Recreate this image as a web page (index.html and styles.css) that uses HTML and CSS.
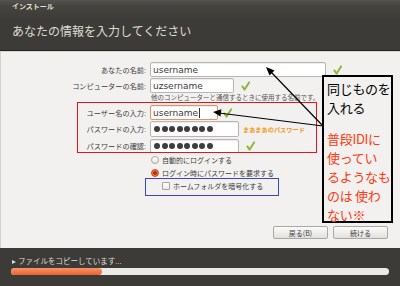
FILE: index.html
```html
<!DOCTYPE html>
<html lang="ja">
<head>
  <meta charset="UTF-8">
  <title>インストール</title>
  <link rel="stylesheet" href="styles.css">
</head>
<body>
<div class="window">
  <header class="head">
    <div class="wintitle">インストール</div>
    <h1 class="title">あなたの情報を入力してください</h1>
  </header>

  <main class="content">
    <div class="row r1">
      <label>あなたの名前:</label>
      <span class="input w176">username</span>
      <svg class="ok" viewBox="0 0 10 11" width="9" height="10"><path d="M1.5 6 L4 9.5 L9 1.5" fill="none" stroke="#8cb83e" stroke-width="2.2" stroke-linecap="round" stroke-linejoin="round"/></svg>
    </div>
    <div class="row r2">
      <label>コンピューターの名前:</label>
      <span class="input w84">uzsername</span>
      <svg class="ok" viewBox="0 0 10 11" width="9" height="10"><path d="M1.5 6 L4 9.5 L9 1.5" fill="none" stroke="#8cb83e" stroke-width="2.2" stroke-linecap="round" stroke-linejoin="round"/></svg>
    </div>
    <div class="hint">他のコンピューターと通信するときに使用する名前です。</div>
    <div class="row r3">
      <label>ユーザー名の入力:</label>
      <span class="input w68 focus">username<i class="caret"></i></span>
      <svg class="ok near" viewBox="0 0 10 11" width="9" height="10"><path d="M1.5 6 L4 9.5 L9 1.5" fill="none" stroke="#8cb83e" stroke-width="2.2" stroke-linecap="round" stroke-linejoin="round"/></svg>
    </div>
    <div class="row r4">
      <label>パスワードの入力:</label>
      <span class="input w89 dots"><i></i><i></i><i></i><i></i><i></i><i></i><i></i><i></i></span>
      <span class="strength">まあまあのパスワード</span>
    </div>
    <div class="row r5">
      <label>パスワードの確認:</label>
      <span class="input w89 dots"><i></i><i></i><i></i><i></i><i></i><i></i><i></i><i></i></span>
      <svg class="ok" viewBox="0 0 10 11" width="9" height="10"><path d="M1.5 6 L4 9.5 L9 1.5" fill="none" stroke="#8cb83e" stroke-width="2.2" stroke-linecap="round" stroke-linejoin="round"/></svg>
    </div>

    <div class="opt"><span class="radio"></span>自動的にログインする</div>
    <div class="opt"><span class="radio on"></span>ログイン時にパスワードを要求する</div>
    <div class="opt sub"><span class="check"></span>ホームフォルダを暗号化する</div>

    <div class="buttons">
      <button class="btn">戻る(B)</button>
      <button class="btn">続ける</button>
    </div>
  </main>

  <footer class="foot">
    <div class="status"><span class="tri"></span>ファイルをコピーしています...</div>
    <div class="trough"><div class="fill" style="width: 24%"></div></div>
  </footer>

  <!-- annotations drawn over the screenshot -->
  <div class="mark red"></div>
  <div class="mark blue"></div>
  <svg class="arrows" width="400" height="286" viewBox="0 0 400 286">
    <line x1="323" y1="126" x2="271" y2="72" stroke="#000" stroke-width="1.2"/>
    <polygon points="266,67 274.5,70.6 269.5,75.6" fill="#000"/>
    <line x1="323" y1="126" x2="219" y2="113" stroke="#000" stroke-width="1.2"/>
    <polygon points="213,112 221.4,109.3 220.5,116.5" fill="#000"/>
  </svg>
  <div class="note">
    <div class="same">同じものを<br>入れる</div>
    <div class="warn">普段IDIに<br>使ってい<br>るようなも<br>のは 使わ<br>ない※</div>
  </div>
</div>
</body>
</html>
```

FILE: styles.css
```css
body {
  margin: 0;
  font-family: "Liberation Sans", "Noto Sans CJK JP", sans-serif;
  background: #f2f1f0;
}
.window {
  position: relative;
  width: 400px;
  height: 286px;
  overflow: hidden;
}
.head {
  height: 50px;
  background: linear-gradient(#55534f 0, #45443f 6px, #3c3b37 20px);
  border-bottom: 1px solid #262522;
  color: #dfdbd2;
}
.wintitle {
  padding: 2px 12px 0;
  font-size: 7px;
  line-height: 9px;
  font-weight: bold;
  color: #e4e1da;
}
.title {
  margin: 13px 0 0 12px;
  font-family: "Noto Sans CJK JP", sans-serif;
  font-size: 12px;
  line-height: 13px;
  font-weight: normal;
}
.content {
  box-sizing: border-box;
  height: 197px;
  padding-top: 10px;
  padding-bottom: 9px;
  border-top: 1px solid #d8d6d1;
  border-left: 1px solid #d4d2cd;
  display: flex;
  flex-direction: column;
}
.row {
  display: flex;
  align-items: center;
  height: 15px;
  font-size: 7.2px;
  color: #3c3c3c;
}
.row label {
  box-sizing: border-box;
  width: 149px;
  padding-right: 4px;
  text-align: right;
  white-space: nowrap;
}
.r2 { margin-top: 1px; }
.r3 { margin-top: 2px; }
.r4 { margin-top: 1px; height: 16px; }
.r5 { margin-top: 2px; height: 14px; }
.input {
  box-sizing: border-box;
  height: 100%;
  display: flex;
  align-items: center;
  padding-left: 2px;
  background: #fff;
  border: 1px solid #b8b6b0;
  border-radius: 2px;
  box-shadow: inset 0 1px 1px rgba(0,0,0,0.08);
  font-family: "DejaVu Sans", sans-serif;
  font-size: 9px;
  color: #3a3a3a;
}
.w176 { width: 176px; }
.w84 { width: 84px; }
.w68 { width: 68px; }
.w89 { width: 89px; }
.focus { border-color: #e98e64; }
.caret {
  width: 1px;
  height: 10px;
  margin-left: 1px;
  background: #333;
}
.dots i {
  width: 6px;
  height: 6px;
  margin-right: 1.5px;
  border-radius: 50%;
  background: #3d3d3d;
}
.dots { padding-left: 3px; }
.ok { margin-left: 7px; }
.ok.near { margin-left: 5px; }
.strength {
  margin-left: 4px;
  font-size: 6.2px;
  font-weight: bold;
  color: #f39a22;
  white-space: nowrap;
}
.hint {
  height: 10px;
  padding-left: 150px;
  font-size: 6.5px;
  line-height: 10px;
  color: #555;
  white-space: nowrap;
}
.opt {
  display: flex;
  align-items: center;
  height: 13px;
  padding-left: 150px;
  font-size: 7px;
  color: #3c3c3c;
  white-space: nowrap;
}
.opt.sub {
  height: 14px;
  padding-left: 161px;
}
.radio {
  box-sizing: border-box;
  width: 8px;
  height: 8px;
  margin-right: 3px;
  border: 1px solid #a9a7a1;
  border-radius: 50%;
  background: linear-gradient(#fff, #e6e4e0);
}
.radio.on {
  border-color: #c24d1c;
  background: radial-gradient(circle, #b8360e 0, #b8360e 1.6px, #f07a48 2.2px, #e8652d 100%);
}
.check {
  box-sizing: border-box;
  width: 8px;
  height: 8px;
  margin-right: 3px;
  border: 1px solid #a5a39d;
  border-radius: 1px;
  background: linear-gradient(#fff, #eceae6);
}
.buttons {
  margin-top: auto;
  display: flex;
  justify-content: flex-end;
  gap: 5px;
  padding-right: 12px;
}
.btn {
  box-sizing: border-box;
  width: 55px;
  height: 13px;
  padding: 0;
  border: 1px solid #aaa8a2;
  border-radius: 2px;
  background: linear-gradient(#fbfbfa, #e3e1dd);
  font-family: "Noto Sans CJK JP", sans-serif;
  font-size: 7px;
  color: #3c3c3c;
}
.foot {
  box-sizing: border-box;
  height: 38px;
  padding: 9px 11px 0 12px;
  background: #3c3b37;
  color: #dfdbd2;
}
.status {
  display: flex;
  align-items: center;
  font-size: 7.5px;
  line-height: 10px;
  white-space: nowrap;
}
.tri {
  width: 0;
  height: 0;
  margin-right: 2px;
  border-left: 4px solid #dfdbd2;
  border-top: 2.5px solid transparent;
  border-bottom: 2.5px solid transparent;
}
.trough {
  margin-top: 1px;
  margin-left: -1px;
  height: 7px;
  border-radius: 4px;
  background: #eceae6;
  overflow: hidden;
}
.fill {
  height: 100%;
  border-radius: 4px;
  background: linear-gradient(#f7946a, #e8612c);
}
.mark {
  position: absolute;
  box-sizing: border-box;
}
.mark.red {
  left: 77px;
  top: 102px;
  width: 240px;
  height: 51px;
  border: 1px solid #e3161b;
}
.mark.blue {
  left: 145px;
  top: 178px;
  width: 134px;
  height: 18px;
  border: 1px solid #3846c8;
}
.arrows {
  position: absolute;
  left: 0;
  top: 0;
}
.note {
  position: absolute;
  left: 322px;
  top: 75px;
  box-sizing: border-box;
  width: 71px;
  height: 148px;
  padding: 2px 0 0 3px;
  border: 2px solid #000;
  background: #f2f1f0;
  font-family: "Noto Sans CJK JP", sans-serif;
  font-size: 13px;
  line-height: 19px;
  white-space: nowrap;
  letter-spacing: -0.3px;
}
.same { color: #000; }
.warn {
  margin-top: 12px;
  color: #ff3a10;
}
```
